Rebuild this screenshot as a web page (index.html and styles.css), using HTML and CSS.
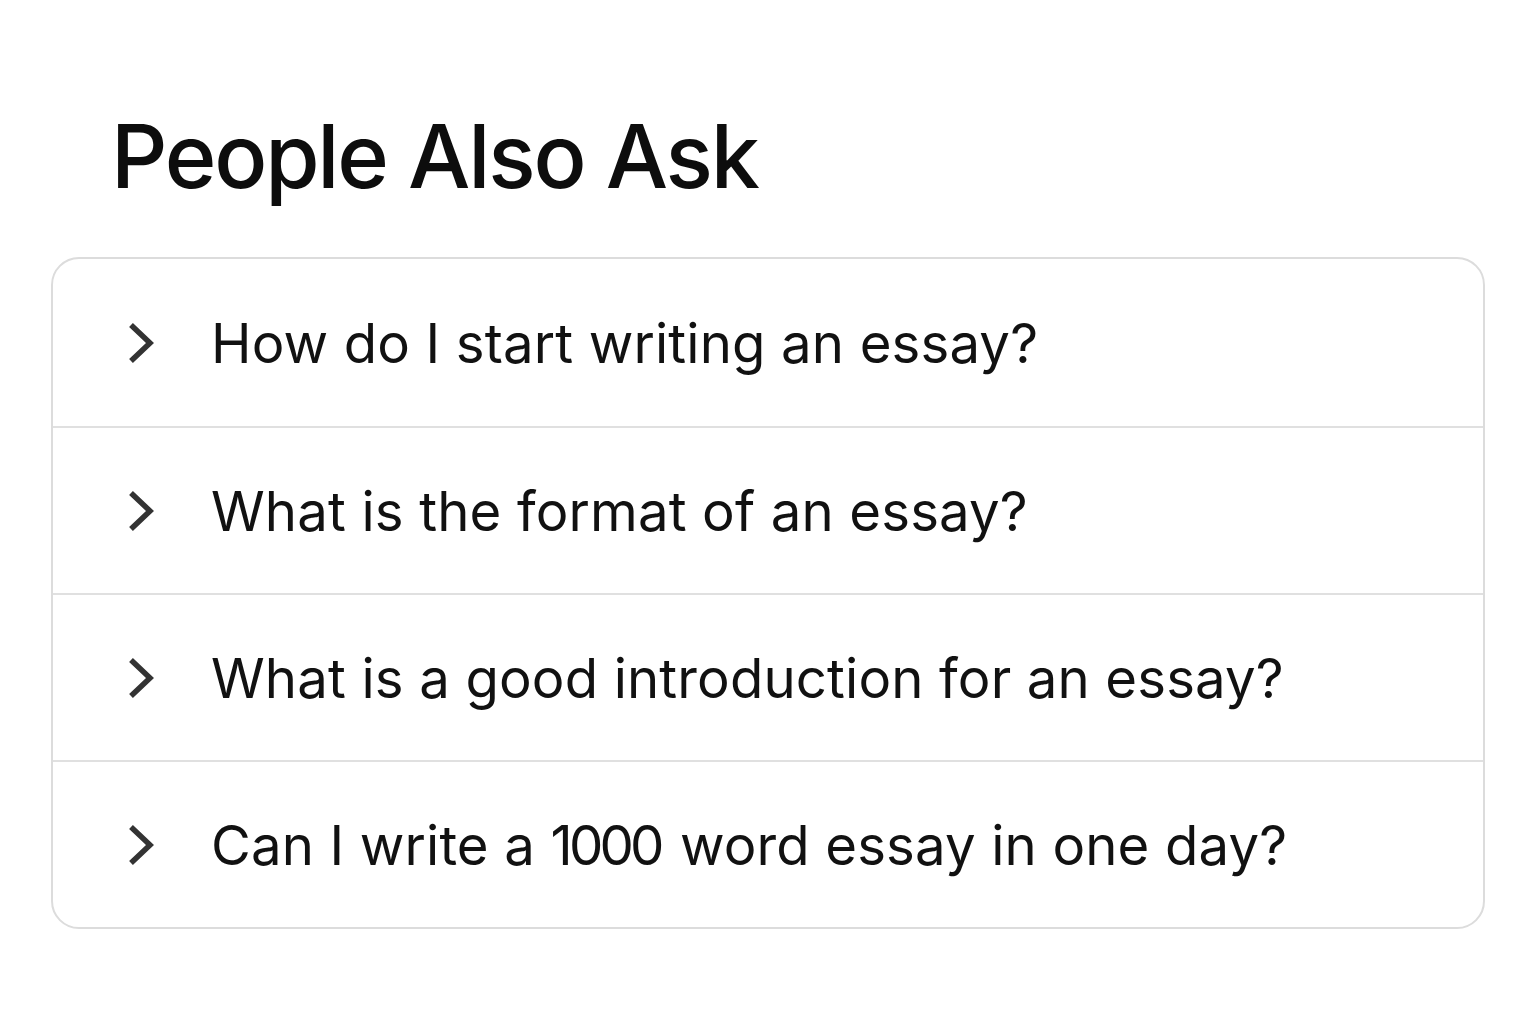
FILE: index.html
```html
<!DOCTYPE html>
<html lang="en">
<head>
<meta charset="utf-8">
<title>People Also Ask</title>
<link rel="stylesheet" href="styles.css">
</head>
<body>
<main class="paa">
  <h1 class="paa-title">People Also Ask</h1>
  <ul class="paa-list">
    <li class="paa-item">
      <svg class="chev" viewBox="0 0 28 42" width="28" height="42"><path d="M4 3 L23 21 L4 39" fill="none" stroke="#333" stroke-width="5.5"/></svg>
      <span class="q">How do I start writing an essay?</span>
    </li>
    <li class="paa-item">
      <svg class="chev" viewBox="0 0 28 42" width="28" height="42"><path d="M4 3 L23 21 L4 39" fill="none" stroke="#333" stroke-width="5.5"/></svg>
      <span class="q">What is the format of an essay?</span>
    </li>
    <li class="paa-item">
      <svg class="chev" viewBox="0 0 28 42" width="28" height="42"><path d="M4 3 L23 21 L4 39" fill="none" stroke="#333" stroke-width="5.5"/></svg>
      <span class="q">What is a good introduction for an essay?</span>
    </li>
    <li class="paa-item">
      <svg class="chev" viewBox="0 0 28 42" width="28" height="42"><path d="M4 3 L23 21 L4 39" fill="none" stroke="#333" stroke-width="5.5"/></svg>
      <span class="q">Can I write a <span class="num">1000</span> word essay in one day?</span>
    </li>
  </ul>
</main>
</body>
</html>
```

FILE: styles.css
```css
html, body {
  margin: 0;
  padding: 0;
  background: #fff;
}
body {
  font-family: Inter, "Liberation Sans", sans-serif;
  color: #111;
}
.paa {
  padding: 100px 51px 0;
}
.paa-title {
  margin: 0 0 44px 60px;
  font-size: 88px;
  font-weight: 500;
  letter-spacing: -2.2px;
  line-height: 113px;
  color: #0d0d0d;
}
.paa-list {
  list-style: none;
  margin: 0;
  padding: 0;
  border: 2px solid #dcdcdc;
  border-radius: 28px;
  overflow: hidden;
}
.paa-item {
  display: flex;
  align-items: center;
  height: 165px;
  padding-left: 74px;
  border-top: 2px solid #e0e0e0;
}
.paa-item:first-child {
  border-top: none;
  height: 167px;
}
.chev {
  flex: none;
  display: block;
}
.q {
  margin-left: 56px;
  font-size: 54.5px;
  font-weight: 400;
  letter-spacing: 0.15px;
  color: #111;
}
.num {
  letter-spacing: -3.8px;
  margin-right: 3.8px;
}
```
